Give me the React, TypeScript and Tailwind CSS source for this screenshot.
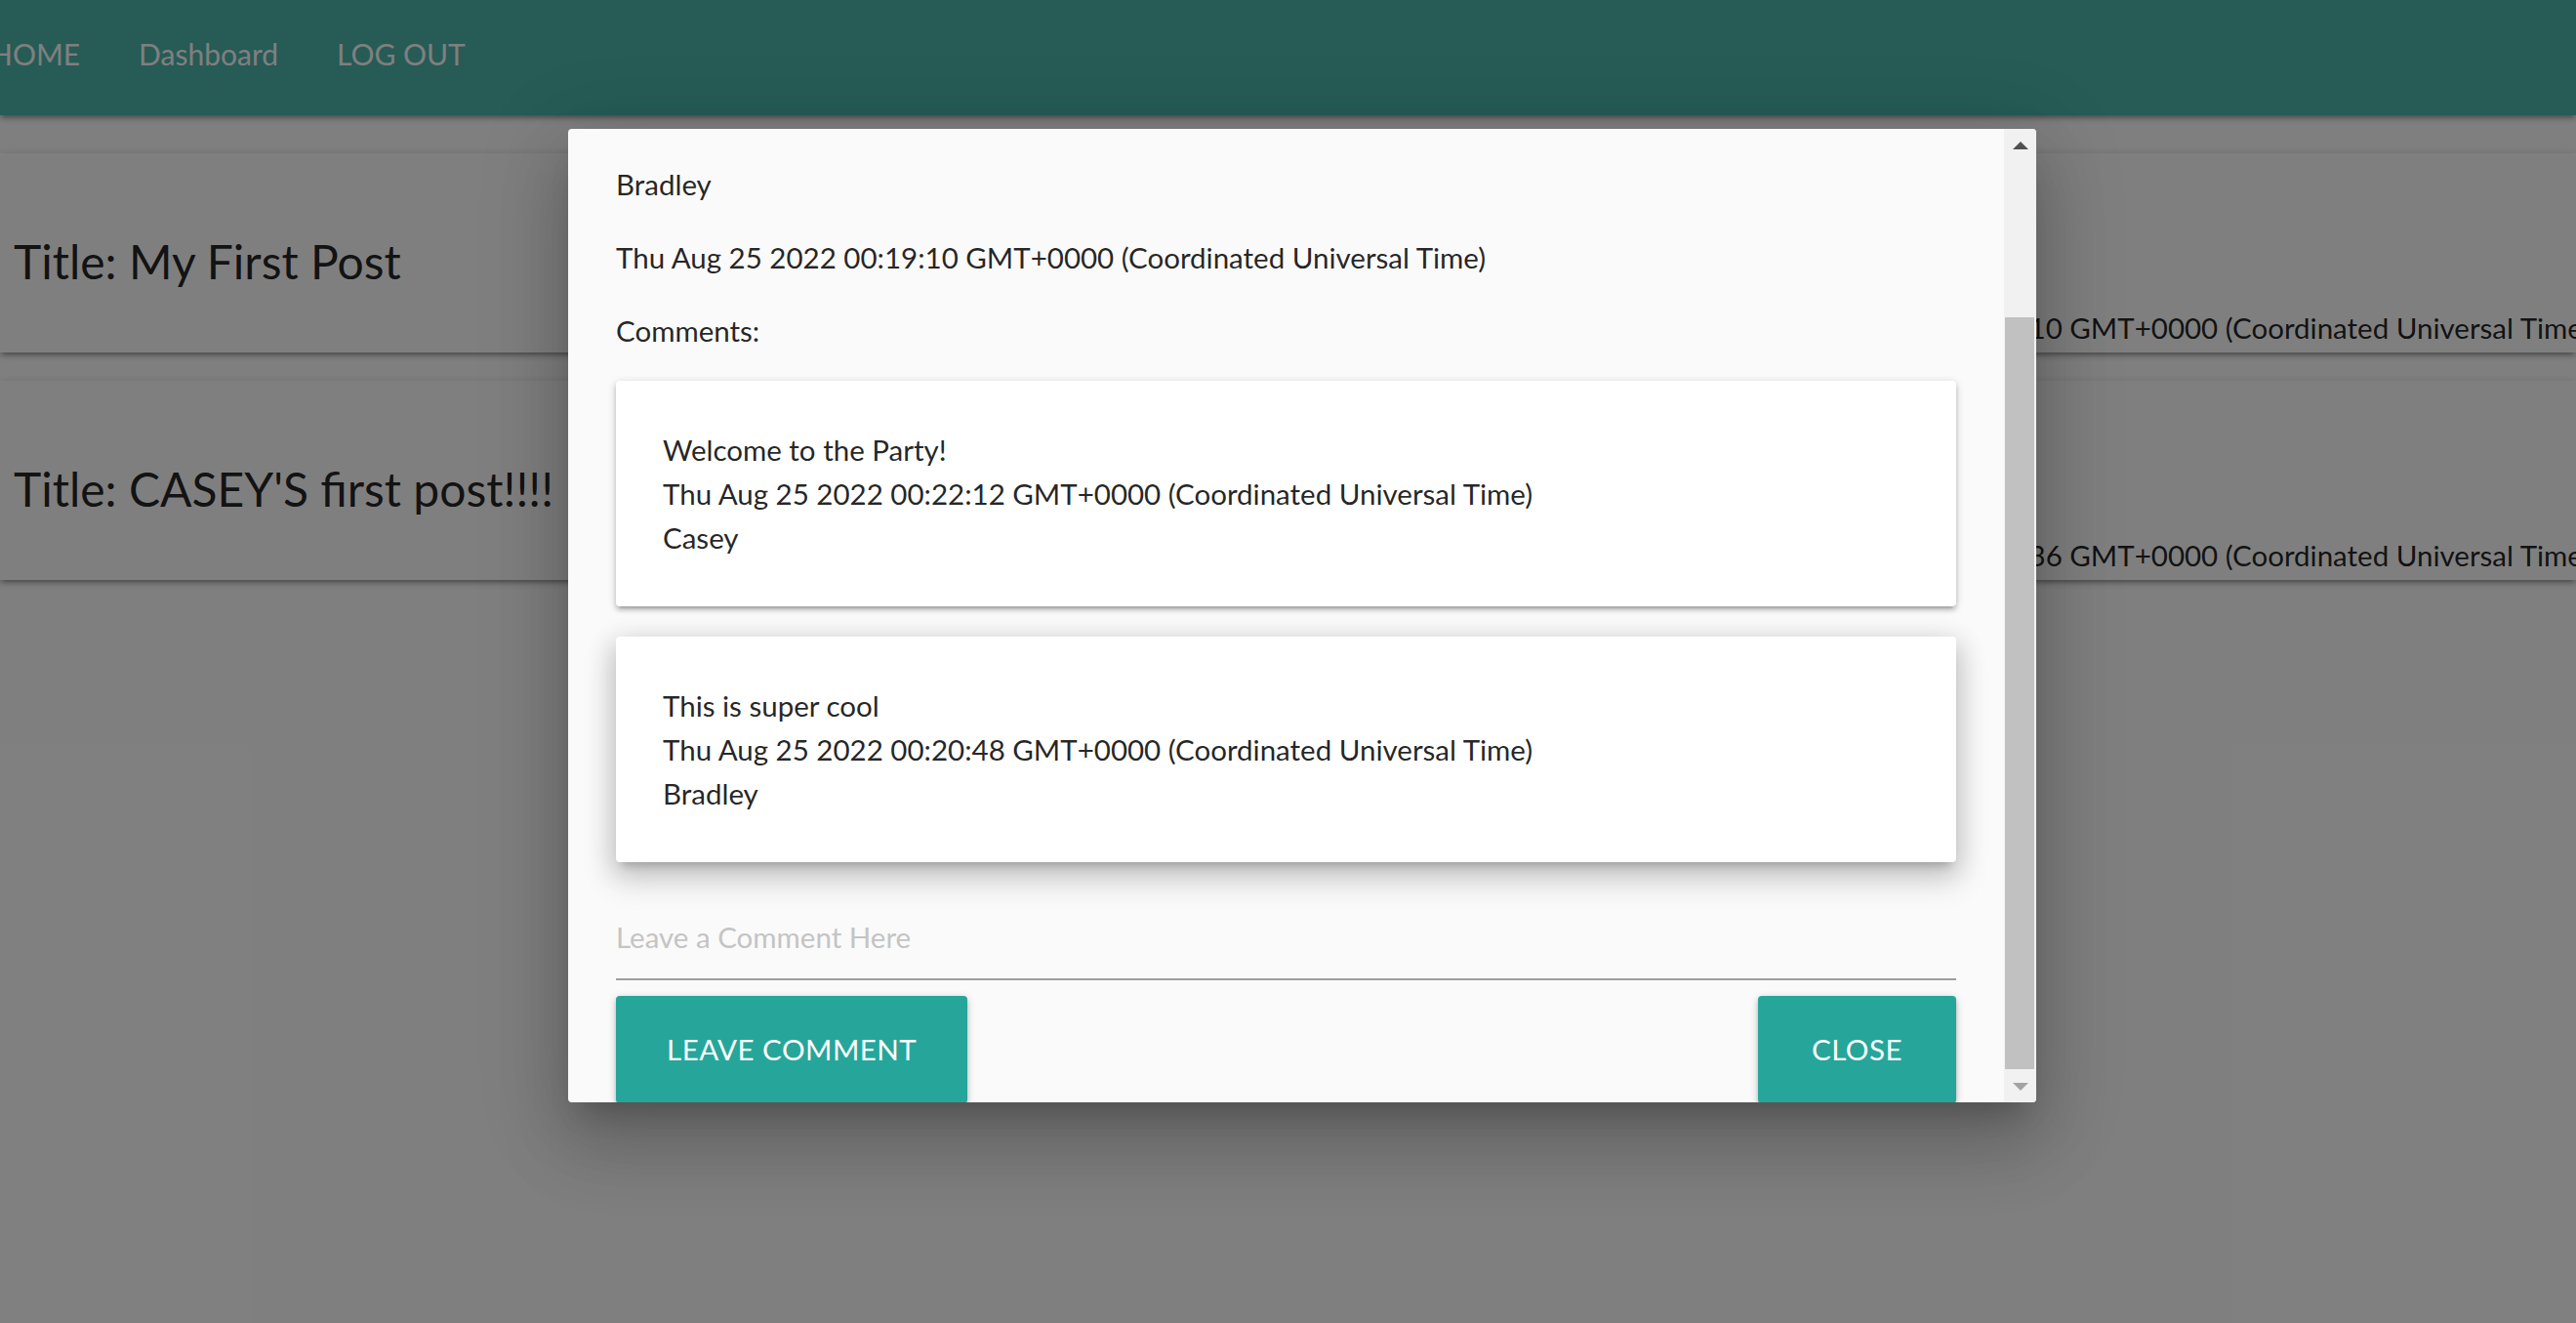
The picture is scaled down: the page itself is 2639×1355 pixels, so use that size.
import React from "react";

const z1 =
  "shadow-[0_4px_4px_0_rgba(0,0,0,0.14),0_6px_2px_-4px_rgba(0,0,0,0.12),0_2px_9px_0_rgba(0,0,0,0.2)]";

function PostCard({ title, date }: { title: string; date: string }) {
  return (
    <div className={`flex bg-white w-full h-[204px] overflow-hidden ${z1}`}>
      <div className="w-[1762px] shrink-0 pl-[14px] pt-[81px]">
        <div className="text-[48px] leading-[60px] font-normal text-[rgba(0,0,0,0.87)] whitespace-nowrap">
          {title}
        </div>
      </div>
      <div className="pt-[156px] whitespace-nowrap text-[29.5px] leading-[45px] text-[rgba(0,0,0,0.87)]">
        {date}
      </div>
    </div>
  );
}

function Comment({
  text,
  date,
  author,
  raised,
}: {
  text: string;
  date: string;
  author: string;
  raised?: boolean;
}) {
  return (
    <div
      className={`bg-white rounded-[4px] p-[48px] ${
        raised
          ? "shadow-[0_16px_32px_4px_rgba(0,0,0,0.14),0_6px_26px_4px_rgba(0,0,0,0.12),0_9px_9px_-6px_rgba(0,0,0,0.2)]"
          : z1
      }`}
    >
      <div className="leading-[45px]">{text}</div>
      <div className="leading-[45px]">{date}</div>
      <div className="leading-[45px]">{author}</div>
    </div>
  );
}

export default function App() {
  return (
    <div className="relative w-[2639px] h-[1355px] overflow-hidden bg-white font-['Lato',sans-serif]">
      {/* Navigation */}
      <nav className="relative z-[1] h-[118px] bg-[#4db6ac] flex items-center pb-[8px] shadow-[0_4px_4px_0_rgba(0,0,0,0.14),0_6px_2px_-4px_rgba(0,0,0,0.12),0_2px_9px_0_rgba(0,0,0,0.2)]">
        <ul className="flex -ml-[40px] text-white text-[30px]">
          <li className="px-[30px]">HOME</li>
          <li className="px-[30px]">Dashboard</li>
          <li className="px-[30px]">LOG OUT</li>
        </ul>
      </nav>

      {/* Posts */}
      <main className="pt-[39px] flex flex-col gap-[29px]">
        <PostCard
          title="Title: My First Post"
          date="Thu Aug 25 2022 00:19:10 GMT+0000 (Coordinated Universal Time)"
        />
        <PostCard
          title="Title: CASEY'S first post!!!!"
          date="Thu Aug 25 2022 00:21:36 GMT+0000 (Coordinated Universal Time)"
        />
      </main>

      {/* Overlay */}
      <div className="absolute inset-0 z-[2] bg-black/50" />

      {/* Modal */}
      <div className="absolute z-[3] left-[582px] top-[132px] w-[1504px] h-[997px] bg-[#fafafa] rounded-[4px] overflow-hidden flex shadow-[0_45px_71px_6px_rgba(0,0,0,0.14),0_17px_86px_15px_rgba(0,0,0,0.12),0_21px_28px_-13px_rgba(0,0,0,0.2)]">
        <div className="flex-1 min-w-0 px-[49px] pt-[34px] text-[29.5px] text-[rgba(0,0,0,0.87)]">
          <p className="leading-[45px]">Bradley</p>
          <p className="mt-[30px] leading-[45px]">
            Thu Aug 25 2022 00:19:10 GMT+0000 (Coordinated Universal Time)
          </p>
          <p className="mt-[30px] leading-[45px]">Comments:</p>

          <div className="mt-[29px]">
            <Comment
              text="Welcome to the Party!"
              date="Thu Aug 25 2022 00:22:12 GMT+0000 (Coordinated Universal Time)"
              author="Casey"
            />
          </div>
          <div className="mt-[31px]">
            <Comment
              text="This is super cool"
              date="Thu Aug 25 2022 00:20:48 GMT+0000 (Coordinated Universal Time)"
              author="Bradley"
              raised
            />
          </div>

          <input
            type="text"
            placeholder="Leave a Comment Here"
            className="mt-[54px] block w-full h-[67px] pb-[20px] bg-transparent border-0 border-b-2 border-[#9e9e9e] outline-none text-[29.5px] leading-[45px] placeholder:text-[#c4c4c4]"
          />

          <div className="mt-[16px] flex justify-between">
            <button
              className={`h-[110px] px-[52px] bg-[#26a69a] text-white text-[29.5px] uppercase tracking-[0.5px] rounded-[4px] ${z1}`}
            >
              Leave Comment
            </button>
            <button
              className={`h-[110px] px-[55px] bg-[#26a69a] text-white text-[29.5px] uppercase tracking-[0.5px] rounded-[4px] ${z1}`}
            >
              Close
            </button>
          </div>
        </div>

        {/* Scrollbar */}
        <div className="w-[33px] shrink-0 bg-[#f1f1f1] flex flex-col">
          <div className="h-[33px] flex items-center justify-center">
            <svg width="16" height="8" viewBox="0 0 16 8">
              <polygon points="0,8 8,0 16,8" fill="#505050" />
            </svg>
          </div>
          <div className="flex-1 pt-[160px] pb-[1px] pl-[1px] pr-[2px] flex">
            <div className="flex-1 bg-[#c1c1c1]" />
          </div>
          <div className="h-[33px] flex items-center justify-center">
            <svg width="16" height="8" viewBox="0 0 16 8">
              <polygon points="0,0 16,0 8,8" fill="#a3a3a3" />
            </svg>
          </div>
        </div>
      </div>
    </div>
  );
}
